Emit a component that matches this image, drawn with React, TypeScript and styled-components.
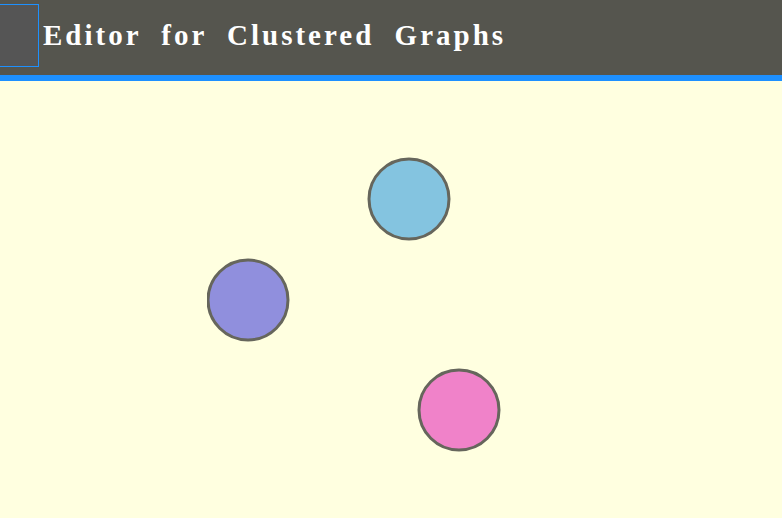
import React from "react";
import styled, { createGlobalStyle } from "styled-components";

const GlobalStyle = createGlobalStyle`
  *, *::before, *::after { box-sizing: border-box; }
  html, body, #root { height: 100%; }
  body { margin: 0; background: #ffffe0; overflow: hidden; }
`;

const Page = styled.div`
  display: flex;
  flex-direction: column;
  min-height: 100%;
`;

const Header = styled.header`
  display: flex;
  align-items: flex-start;
  gap: 4px;
  padding: 4px 0 8px;
  background: #55554e;
  border-bottom: 6px solid #1e90ff;
`;

const MenuButton = styled.button`
  width: 39px;
  height: 63px;
  padding: 0;
  background: #555555;
  border: 1px solid #1e90ff;
  border-left: 0;
`;

const Title = styled.h1`
  margin: 0;
  font: bold 29px/62px "Liberation Serif", "Times New Roman", serif;
  letter-spacing: 3px;
  word-spacing: 10px;
  white-space: nowrap;
  color: #ffffff;
`;

const Canvas = styled.main`
  flex: 1;
  position: relative;
`;

const NodeShape = styled.svg<{ $x: number; $y: number }>`
  position: absolute;
  left: ${({ $x }) => $x}px;
  top: ${({ $y }) => $y}px;
  width: 84px;
  height: 84px;
`;

const Disc = styled.circle`
  stroke: #66665c;
  stroke-width: 3px;
`;

const nodes = [
  { id: "blue", x: 367, y: 76, cx: 42, cy: 42, fill: "#84c4e0" },
  { id: "violet", x: 207, y: 177, cx: 41, cy: 42, fill: "#908fdd" },
  { id: "pink", x: 417, y: 287, cx: 42, cy: 42, fill: "#f082c9" },
];

export default function App() {
  return (
    <>
      <GlobalStyle />
      <Page>
        <Header>
          <MenuButton type="button" aria-label="Menu" />
          <Title>Editor for Clustered Graphs</Title>
        </Header>
        <Canvas>
          {nodes.map((node) => (
            <NodeShape key={node.id} $x={node.x} $y={node.y} role="img" aria-label={`${node.id} node`}>
              <Disc cx={node.cx} cy={node.cy} r={40} fill={node.fill} />
            </NodeShape>
          ))}
        </Canvas>
      </Page>
    </>
  );
}
